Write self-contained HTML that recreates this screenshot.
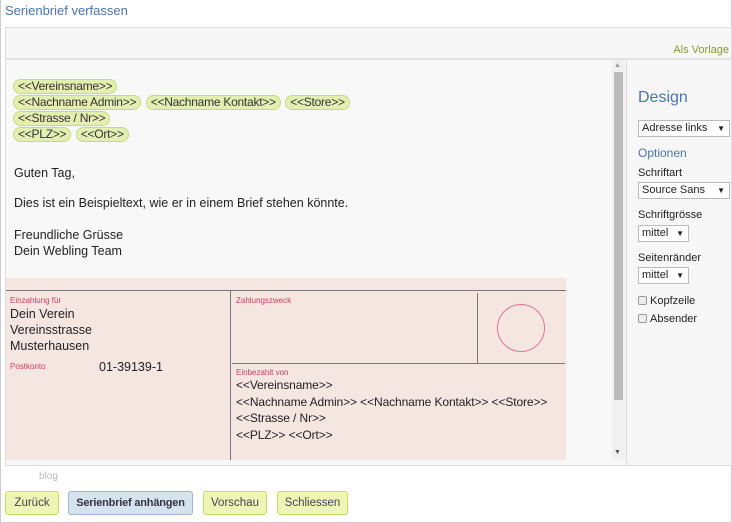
<!DOCTYPE html>
<html><head><meta charset="utf-8"><style>
*{box-sizing:border-box;margin:0;padding:0}
body{width:732px;height:523px;background:#fff;font-family:"Liberation Sans","DejaVu Sans",sans-serif;position:relative;overflow:hidden;color:#222}
.a{position:absolute}
.tag{display:inline-block;background:#e3efb0;border:1px solid #c5dc7a;border-radius:8px;padding:0 4px;font-size:12px;line-height:13px;margin:0;color:#333;letter-spacing:-0.25px;vertical-align:top}
.row{height:16px}
.t{font-size:12.5px;color:#222}
.sm{font-size:8px;color:#d0405a}
.btn{position:absolute;top:491px;height:24px;border:1px solid #c9dc62;background:#eef6b5;border-radius:3px;font-size:11.5px;line-height:22px;text-align:center;color:#445}
.sel{position:absolute;left:638px;height:17px;border:1px solid #bbb;background:#fff;font-size:11px;line-height:15px;padding-left:3px;color:#222}
.sel:after{content:"▼";position:absolute;right:4px;top:0;font-size:8px}
.lab{position:absolute;left:638px;font-size:11px;color:#222}
.cb{display:inline-block;width:9px;height:9px;border:1px solid #999;background:#eee;border-radius:2px;margin-right:3px;vertical-align:-1px}
</style></head><body>
<div class="a" style="left:0;top:0;width:732px;height:523px;border:1px solid #ccc;border-top:none"></div>
<div class="a" style="left:5px;top:3px;font-size:13px;color:#4a74b0">Serienbrief verfassen</div>
<div class="a" style="left:5px;top:27px;width:727px;height:439px;border:1px solid #ddd;background:#f7f7f7"></div>
<div class="a" style="left:6px;top:58px;width:726px;height:2px;background:#e2e2e2"></div>
<div class="a" style="right:3px;top:44px;font-size:11px;color:#8a9a30">Als Vorlage</div>
<div class="a" style="left:6px;top:60px;width:605px;height:400px;background:#f8f8f8"></div>
<div class="a" style="left:612px;top:60px;width:13px;height:400px;background:#f0f0f0"></div>
<div class="a" style="left:614px;top:72px;width:9px;height:328px;background:#bbb"></div>
<div class="a" style="left:614px;top:62px;font-size:7px;color:#999">▲</div>
<div class="a" style="left:614px;top:449px;font-size:7px;color:#555">▼</div>
<div class="a" style="left:626px;top:60px;width:1px;height:405px;background:#ddd"></div>
<div class="a" style="left:13px;top:79px;width:560px">
<div class="row"><span class="tag">&lt;&lt;Vereinsname&gt;&gt;</span></div>
<div class="row"><span class="tag">&lt;&lt;Nachname Admin&gt;&gt;</span> <span class="tag">&lt;&lt;Nachname Kontakt&gt;&gt;</span> <span class="tag">&lt;&lt;Store&gt;&gt;</span></div>
<div class="row"><span class="tag">&lt;&lt;Strasse / Nr&gt;&gt;</span></div>
<div class="row"><span class="tag">&lt;&lt;PLZ&gt;&gt;</span> <span class="tag">&lt;&lt;Ort&gt;&gt;</span></div>
</div>
<div class="a t" style="left:14px;top:166px">Guten Tag,</div>
<div class="a t" style="left:14px;top:196px">Dies ist ein Beispieltext, wie er in einem Brief stehen könnte.</div>
<div class="a t" style="left:14px;top:227px;line-height:16px">Freundliche Grüsse<br>Dein Webling Team</div>
<div class="a" style="left:6px;top:278px;width:560px;height:182px;background:#f6e6e2"></div>
<div class="a" style="left:6px;top:290px;width:560px;height:1px;background:#777"></div>
<div class="a" style="left:230px;top:291px;width:1px;height:169px;background:#777"></div>
<div class="a" style="left:477px;top:293px;width:1px;height:70px;background:#777"></div>
<div class="a" style="left:232px;top:363px;width:333px;height:1px;background:#777"></div>
<div class="a" style="left:497px;top:304px;width:48px;height:48px;border:1px solid #e0768a;border-radius:50%"></div>
<div class="a sm" style="left:10px;top:296px">Einzahlung für</div>
<div class="a t" style="left:10px;top:306px;line-height:16px">Dein Verein<br>Vereinsstrasse<br>Musterhausen</div>
<div class="a sm" style="left:10px;top:362px">Postkonto</div>
<div class="a t" style="left:99px;top:360px">01-39139-1</div>
<div class="a sm" style="left:236px;top:296px">Zahlungszweck</div>
<div class="a sm" style="left:236px;top:368px">Einbezahlt von</div>
<div class="a t" style="left:236px;top:377px;line-height:16.5px;font-size:12px;letter-spacing:-0.1px">&lt;&lt;Vereinsname&gt;&gt;<br>&lt;&lt;Nachname Admin&gt;&gt; &lt;&lt;Nachname Kontakt&gt;&gt; &lt;&lt;Store&gt;&gt;<br>&lt;&lt;Strasse / Nr&gt;&gt;<br>&lt;&lt;PLZ&gt;&gt; &lt;&lt;Ort&gt;&gt;</div>
<div class="a" style="left:638px;top:89px;font-size:16px;color:#4a74b0">Design</div>
<div class="sel" style="top:120px;width:92px">Adresse links</div>
<div class="a" style="left:638px;top:146px;font-size:12px;color:#4a74b0">Optionen</div>
<div class="lab" style="top:167px">Schriftart</div>
<div class="sel" style="top:182px;width:92px">Source Sans</div>
<div class="lab" style="top:209px">Schriftgrösse</div>
<div class="sel" style="top:225px;width:51px">mittel</div>
<div class="lab" style="top:252px">Seitenränder</div>
<div class="sel" style="top:267px;width:51px">mittel</div>
<div class="lab" style="top:295px"><span class="cb"></span>Kopfzeile</div>
<div class="lab" style="top:313px"><span class="cb"></span>Absender</div>
<div class="a" style="left:39px;top:471px;font-size:10px;color:#bbb">blog</div>
<div class="btn" style="left:5px;width:54px">Zurück</div>
<div class="btn" style="left:68px;width:125px;background:#d5e2f0;border-color:#9fb5d0;font-weight:bold;color:#334;font-size:11px;letter-spacing:-0.2px">Serienbrief anhängen</div>
<div class="btn" style="left:203px;width:64px">Vorschau</div>
<div class="btn" style="left:277px;width:71px">Schliessen</div>
</body></html>
